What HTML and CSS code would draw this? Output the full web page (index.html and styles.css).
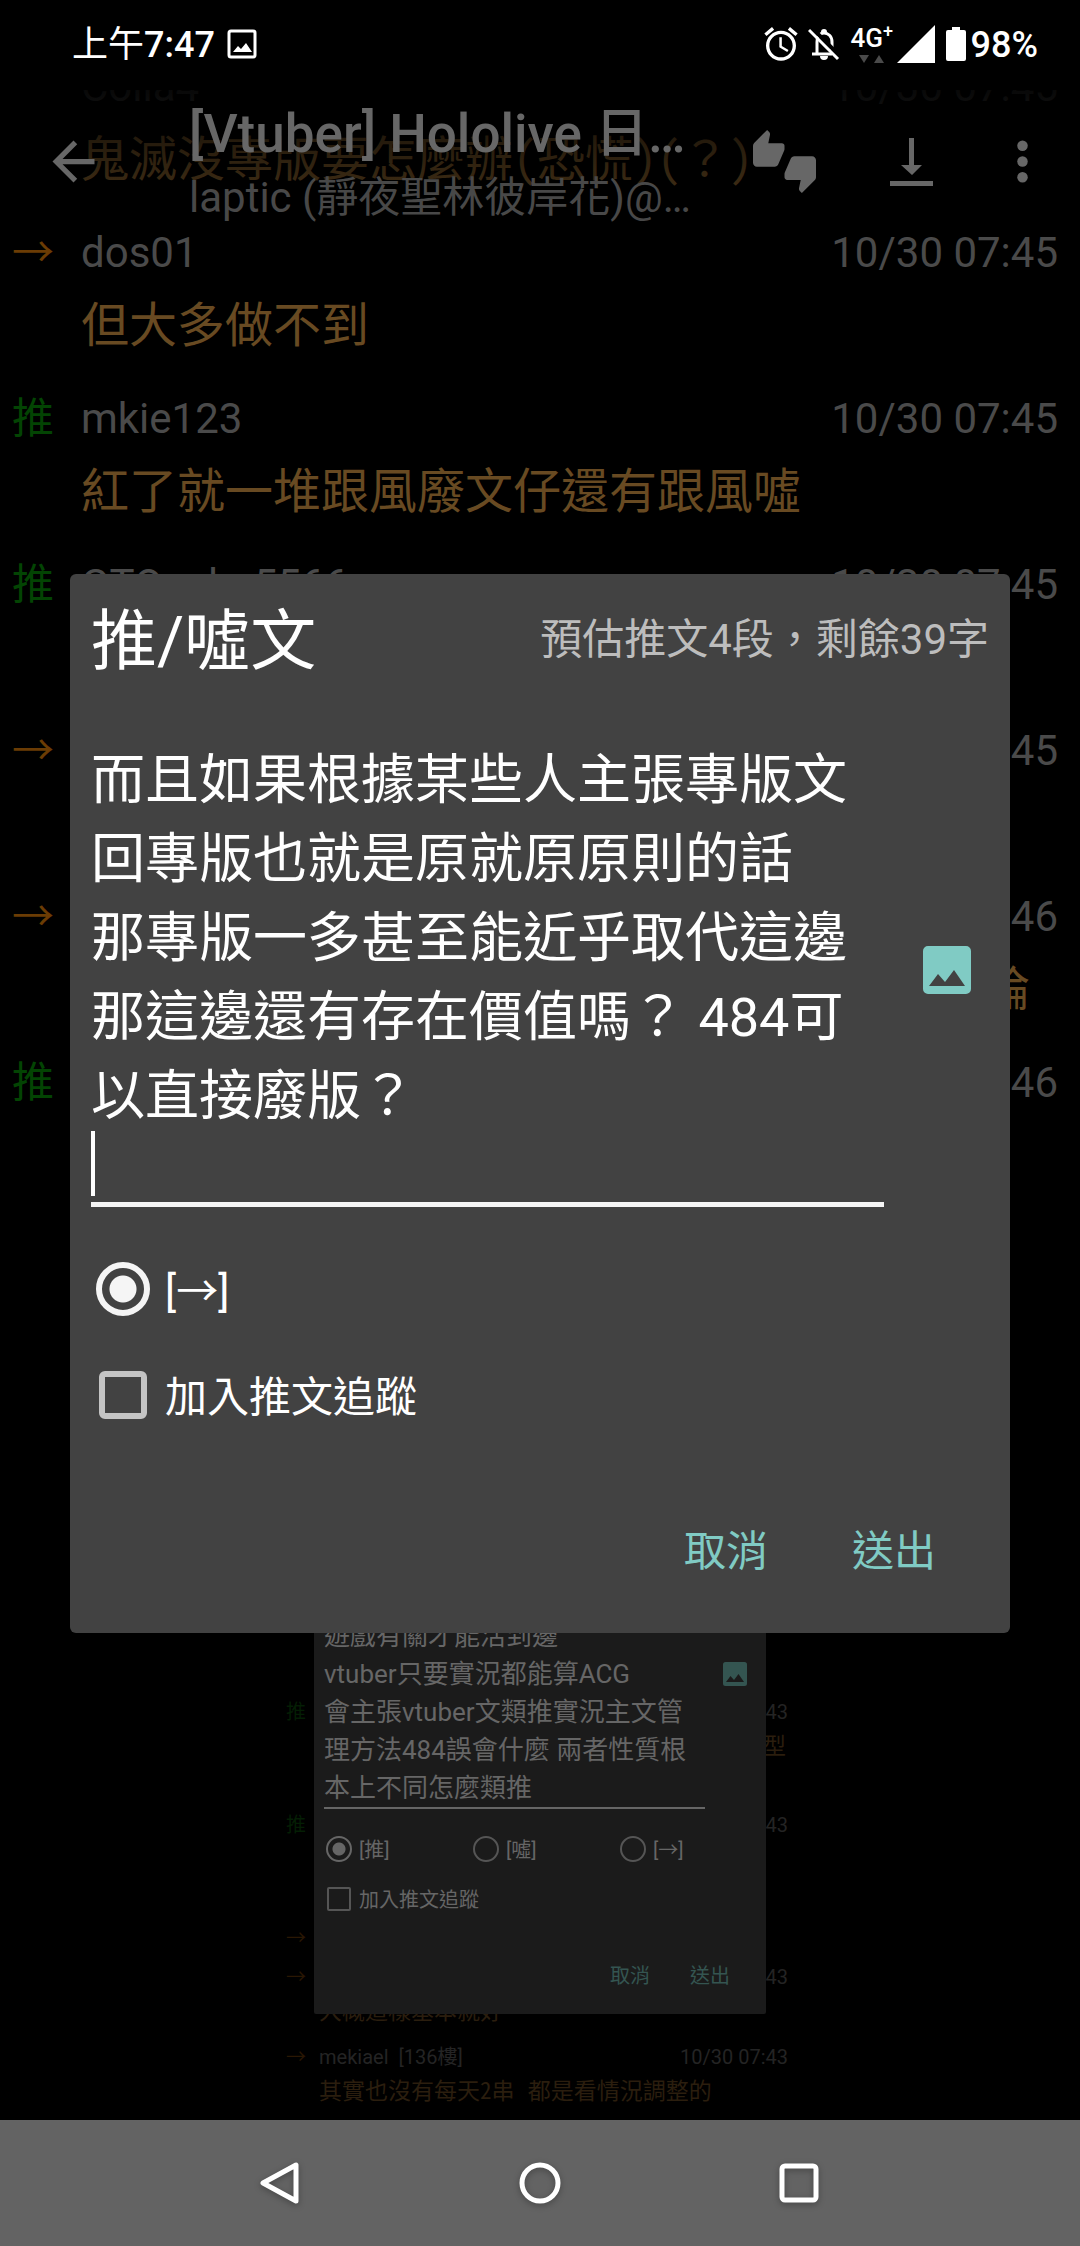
FILE: index.html
```html
<!DOCTYPE html>
<html lang="zh-Hant">
<head>
<meta charset="utf-8">
<meta name="viewport" content="width=device-width, initial-scale=1">
<title>推/噓文</title>
<link rel="stylesheet" href="styles.css">
</head>
<body>
<div class="screen">
  <header class="status">
    <span class="status-text"><span class="meridiem">上午</span>7:47</span>
    <svg class="status-photo" viewBox="0 0 30 30"><rect x="2" y="2" width="26" height="26" rx="2" fill="none" stroke="#fff" stroke-width="3"/><path d="M6 23l5-6 3 3 5-6 6 9z" fill="#fff"/></svg>
    <span class="spacer"></span>
    <svg class="status-alarm" viewBox="0 0 24 24"><path fill="#fff" d="M22 5.72l-4.6-3.86-1.29 1.53 4.6 3.86L22 5.72zM7.88 3.39L6.6 1.86 2 5.71l1.29 1.53 4.59-3.85zM12.5 8H11v6l4.75 2.85.75-1.23-4-2.37V8zM12 4c-4.97 0-9 4.03-9 9s4.02 9 9 9c4.97 0 9-4.03 9-9s-4.03-9-9-9zm0 16c-3.87 0-7-3.13-7-7s3.13-7 7-7 7 3.13 7 7-3.13 7-7 7z"/></svg>
    <svg class="status-bell" viewBox="0 0 32 34"><path d="M9 27V15c0-6 3-9 7-9s8 3 8 9v8M4 27h20" fill="none" stroke="#fff" stroke-width="3"/><path d="M13 5a3 3 0 0 1 6 0zM12 29h8a4 4 0 0 1-8 0z" fill="#fff"/><path d="M4 1l29 29" stroke="#000" stroke-width="4"/><path d="M1 3l29 29" stroke="#fff" stroke-width="3"/></svg>
    <span class="network">
      <span class="network-name">4G<sup>+</sup></span>
      <svg class="network-traffic" viewBox="0 0 26 8"><path d="M0 0h10L5 8zM15 8h10l-5-8z" fill="#4a4a4a"/></svg>
    </span>
    <svg class="status-signal" viewBox="0 0 38 38"><path d="M38 0v38H0z" fill="#fff"/></svg>
    <svg class="status-battery" viewBox="0 0 20 34"><path d="M6 0h8v3h4a2 2 0 0 1 2 2v27a2 2 0 0 1-2 2H2a2 2 0 0 1-2-2V5a2 2 0 0 1 2-2h4z" fill="#fff"/></svg>
    <span class="status-text">98%</span>
  </header>

  <nav class="toolbar">
    <button class="tool back" aria-label="返回"><svg viewBox="0 0 24 24"><path d="M20 11H7.83l5.59-5.59L12 4l-8 8 8 8 1.41-1.41L7.83 13H20v-2z"/></svg></button>
    <div class="headline">
      <h1>[Vtuber] Hololive 日…</h1>
      <p>laptic (靜夜聖林彼岸花)@…</p>
    </div>
    <button class="tool" aria-label="推噓"><svg viewBox="0 0 24 24"><path d="M12 6c0-.55-.45-1-1-1H5.82l.66-3.18.02-.23c0-.31-.13-.59-.33-.8L5.38 0 .44 4.94C.17 5.21 0 5.59 0 6v6.5c0 .83.67 1.5 1.5 1.5h6.75c.62 0 1.15-.38 1.38-.91l2.26-5.29c.07-.17.11-.36.11-.55V6zm10.5 4h-6.75c-.62 0-1.15.38-1.38.91l-2.26 5.29c-.07.17-.11.36-.11.55V18c0 .55.45 1 1 1h5.18l-.66 3.18-.02.24c0 .31.13.59.33.8l.79.78 4.94-4.94c.27-.27.44-.65.44-1.06v-6.5c0-.83-.67-1.5-1.5-1.5z"/></svg></button>
    <button class="tool download" aria-label="下載"><svg viewBox="0 0 63 63"><path d="M29 8h5v27h8L32 45 21 35h8zM10 51h43v5H10z"/></svg></button>
    <button class="tool more" aria-label="更多"><svg viewBox="0 0 24 24"><circle cx="12" cy="6" r="2"/><circle cx="12" cy="12" r="2"/><circle cx="12" cy="18" r="2"/></svg></button>
  </nav>

  <main class="comments">
    <article class="row"><span class="mark"></span><span class="name">Colla4</span><time>10/30 07:45</time><p>鬼滅沒專版要怎麼辦(恐慌)(<span class="full">？</span>)</p></article>
    <article class="row"><span class="mark arrow">→</span><span class="name">dos01</span><time>10/30 07:45</time><p>但大多做不到</p></article>
    <article class="row"><span class="mark push">推</span><span class="name">mkie123</span><time>10/30 07:45</time><p>紅了就一堆跟風廢文仔還有跟風噓</p></article>
    <article class="row"><span class="mark push">推</span><span class="name">GTOcube5566</span><time>10/30 07:45</time></article>
    <article class="row"><span class="mark arrow">→</span><span class="name"></span><time>10/30 07:45</time></article>
    <article class="row"><span class="mark arrow">→</span><span class="name"></span><time>10/30 07:46</time><p class="tail">論</p></article>
    <article class="row"><span class="mark push">推</span><span class="name"></span><time>10/30 07:46</time></article>

    <section class="preview">
      <div class="mini-rows">
        <article class="row"><span class="mark push">推</span><span class="name"></span><time>10/30 07:43</time><p class="tail two">型</p></article>
        <article class="row"><span class="mark push">推</span><span class="name"></span><time>10/30 07:43</time><p class="two"></p></article>
        <article class="row short"><span class="mark arrow">→</span></article>
        <article class="row"><span class="mark arrow">→</span><span class="name"></span><time>10/30 07:43</time><p>大概這樣基本就好</p></article>
        <article class="row"><span class="mark arrow">→</span><span class="name">mekiael&nbsp; [136樓]</span><time>10/30 07:43</time><p>其實也沒有每天2串<span class="full">  </span>都是看情況調整的</p></article>
      </div>
      <form class="mini-dialog">
        <div class="editor">
          <textarea aria-label="推文內容" spellcheck="false" readonly>遊戲有關才能活到邊
vtuber只要實況都能算ACG
會主張vtuber文類推實況主文管理方法484誤會什麼 兩者性質根本上不同怎麼類推</textarea>
          <button type="button" class="photo" aria-label="插入圖片"><svg viewBox="0 0 48 48"><path fill-rule="evenodd" d="M5 0h38a5 5 0 0 1 5 5v38a5 5 0 0 1-5 5H5a5 5 0 0 1-5-5V5a5 5 0 0 1 5-5zM6 40h36L31 24l-9 12-7-8z"/></svg></button>
        </div>
        <div class="options">
          <label><input type="radio" name="mini" checked><span>[推]</span></label>
          <label><input type="radio" name="mini"><span>[噓]</span></label>
          <label><input type="radio" name="mini"><span>[→]</span></label>
        </div>
        <label class="track"><input type="checkbox"><span>加入推文追蹤</span></label>
        <div class="actions"><button type="button">取消</button><button type="button">送出</button></div>
      </form>
    </section>
  </main>

  <div class="overlay">
    <form class="dialog" role="dialog" aria-labelledby="dialog-title">
      <div class="dialog-head"><h2 id="dialog-title">推/噓文</h2><span>預估推文4段，剩餘39字</span></div>
      <div class="editor">
        <div class="field">
          <textarea aria-label="推文內容" spellcheck="false">而且如果根據某些人主張專版文回專版也就是原就原原則的話
那專版一多甚至能近乎取代這邊
那這邊還有存在價值嗎？ 484可以直接廢版？
</textarea>
          <span class="caret"></span>
        </div>
        <button type="button" class="photo" aria-label="插入圖片"><svg viewBox="0 0 48 48"><path fill-rule="evenodd" d="M5 0h38a5 5 0 0 1 5 5v38a5 5 0 0 1-5 5H5a5 5 0 0 1-5-5V5a5 5 0 0 1 5-5zM6 40h36L31 24l-9 12-7-8z"/></svg></button>
      </div>
      <div class="options"><label><input type="radio" name="type" checked><span>[→]</span></label></div>
      <label class="track"><input type="checkbox"><span>加入推文追蹤</span></label>
      <div class="actions"><button type="button">取消</button><button type="button">送出</button></div>
    </form>
  </div>

  <footer class="navbar">
    <button aria-label="返回"><svg viewBox="0 0 44 44"><path d="M37 4v36L4 22z"/></svg></button>
    <button aria-label="主畫面"><svg viewBox="0 0 44 44"><circle cx="22" cy="22" r="18"/></svg></button>
    <button aria-label="最近使用"><svg viewBox="0 0 44 44"><rect x="5" y="5" width="34" height="34" rx="3"/></svg></button>
  </footer>
</div>
</body>
</html>
```
FILE: styles.css
```css
* { box-sizing: border-box; }

body {
  margin: 0;
  background: #000;
  font-family: Roboto, "Noto Sans CJK TC", sans-serif;
}

h1, h2, p { margin: 0; font-weight: 400; }

button {
  padding: 0;
  border: 0;
  background: none;
  color: inherit;
  font: inherit;
}

svg { display: block; flex: none; }

.screen {
  position: relative;
  display: flex;
  flex-direction: column;
  min-height: 100vh;
  overflow: hidden;
}

/* Status bar */
.status {
  position: absolute;
  z-index: 3;
  top: 0;
  left: 0;
  right: 0;
  display: flex;
  align-items: center;
  height: 90px;
  padding: 0 42px 2px 72px;
  background: #000;
  color: #fff;
}
.status-text { padding-top: 2px; font-size: 36px; font-weight: 500; line-height: 48px; }
.meridiem { font-weight: 400; }
.spacer { flex: 1; }
.status-photo { width: 30px; height: 30px; margin-left: 12px; }
.status-alarm { width: 40px; height: 40px; margin-right: 7px; }
.status-bell { width: 32px; height: 34px; margin-right: 11px; }
.network { display: flex; flex-direction: column; gap: 4px; width: 46px; }
.network-name { font-size: 26px; font-weight: 500; line-height: 26px; white-space: nowrap; }
.network-name sup { font-size: 18px; line-height: 0; }
.network-traffic { width: 26px; height: 8px; margin-left: 8px; }
.status-signal { width: 38px; height: 38px; margin-right: 11px; }
.status-battery { width: 20px; height: 34px; margin-right: 5px; }

/* Toolbar floating over the comment list */
.toolbar {
  position: absolute;
  z-index: 2;
  top: 88px;
  left: 0;
  right: 0;
  display: flex;
  align-items: center;
  height: 147px;
  padding-left: 42px;
  background: linear-gradient(rgba(0, 0, 0, .9), rgba(0, 0, 0, .8) 20px, rgba(0, 0, 0, .2));
  color: #676767;
}
.tool svg { width: 63px; height: 63px; fill: currentColor; }
.headline { flex: 1; min-width: 0; margin-left: 84px; padding-top: 5px; white-space: nowrap; }
.headline h1 { font-size: 53px; font-weight: 500; line-height: 68px; }
.headline p { color: #484848; font-size: 42px; line-height: 60px; }
.download { margin-left: 64px; }
.more { margin: 0 26px 0 48px; }

/* Comment list */
.comments { flex: 1; padding-top: 47px; }
.row {
  display: grid;
  grid-template-columns: 69px 1fr auto;
  grid-template-rows: 56px 90px;
  padding: 12px 22px 8px 12px;
  color: #4a4a4a;
  font-size: 42px;
  line-height: 56px;
}
.row p {
  grid-column: 2 / 4;
  color: #684a22;
  font-family: "Noto Sans CJK TC", sans-serif;
  font-feature-settings: "hwid";
  font-size: 48px;
  line-height: 80px;
}
.row .full { font-feature-settings: normal; white-space: pre; }
.row .tail { padding-right: 28px; text-align: right; }
.push { color: #034403; }
.arrow { color: #6b3c04; }

/* Embedded picture of an earlier draft */
.preview {
  position: relative;
  width: 520px;
  margin: 0 auto;
  padding-top: 483px;
}
.mini-rows .row {
  grid-template-columns: 33px 1fr auto;
  grid-template-rows: 28px auto;
  row-gap: 2px;
  padding: 6px 12px 11px 6px;
  color: #242424;
  font-size: 20px;
  line-height: 28px;
}
.mini-rows .short { display: block; padding-bottom: 5px; }
.mini-rows p { color: #2b1e0e; font-size: 23px; line-height: 33px; }
.mini-rows .full { padding-left: 3px; }
.mini-rows .tail { padding-right: 2px; }
.mini-rows .two { height: 66px; }
.mini-rows .push { color: #041e04; }
.mini-rows .arrow { color: #2a1703; }

.mini-dialog {
  position: absolute;
  left: 34px;
  right: 34px;
  bottom: 103px;
  padding: 30px 10px 19px;
  border-radius: 2px;
  background: #1b1b1b;
  color: #666;
  font-size: 20px;
}

/* Reply dialog */
.overlay {
  position: absolute;
  z-index: 4;
  top: 0;
  left: 0;
  right: 0;
  padding: 574px 70px 0;
}
.dialog {
  padding: 26px 21px 40px;
  border-radius: 6px;
  background: #424242;
  color: #fff;
  font-size: 42px;
}
.dialog-head { display: flex; align-items: flex-start; justify-content: space-between; height: 80px; }
.dialog-head h2 { font-size: 66px; line-height: 84px; }
.dialog-head span { color: #bdbdbd; line-height: 80px; }

.editor { display: flex; align-items: center; }
.dialog .editor { gap: 39px; margin-top: 59px; }
.field { position: relative; flex: 1; }
textarea {
  display: block;
  width: 100%;
  padding: 0;
  border: 0;
  outline: 0;
  overflow: hidden;
  resize: none;
  background: none;
  color: inherit;
  font-family: inherit;
}
.field textarea { height: 468px; padding-top: 2px; border-bottom: 5px solid #f5f5f5; font-size: 54px; line-height: 79px; }
.caret { position: absolute; left: 0; bottom: 11px; width: 4px; height: 65px; background: #fff; }
.photo { color: #80cbc4; }
.photo svg { width: 48px; height: 48px; fill: currentColor; }
.dialog .photo { margin-right: 18px; padding-bottom: 6px; }

label { display: flex; align-items: center; }
input { appearance: none; flex: none; margin: 0; }
.dialog .options { margin-top: 29px; }
.dialog label { height: 106px; padding-left: 5px; }
.dialog label span { padding-bottom: 4px; }
.dialog input { width: 54px; height: 54px; margin-right: 15px; border: 6px solid #f5f5f5; }
input[type="radio"] { border-radius: 50%; }
.dialog input:checked { background: radial-gradient(circle, #f5f5f5 13px, transparent 14px); }
.dialog input[type="checkbox"] { width: 48px; height: 48px; margin: 0 18px 0 3px; border-color: #c4c4c4; border-radius: 6px; }
.actions { display: flex; justify-content: flex-end; color: #80cbc4; }
.dialog .actions { gap: 84px; height: 87px; margin-top: 58px; padding: 0 53px 4px 0; }

.mini-dialog .editor { gap: 18px; padding-right: 9px; }
.mini-dialog textarea { height: 269px; padding-top: 77px; border-bottom: 2px solid #666; font-size: 26px; line-height: 38px; }
.mini-dialog .photo { padding-bottom: 2px; color: #345551; }
.mini-dialog .photo svg { width: 24px; height: 24px; }
.mini-dialog .options { display: grid; grid-template-columns: repeat(3, 147px); margin-top: 15px; }
.mini-dialog label { height: 50px; padding-left: 2px; }
.mini-dialog label span { padding-bottom: 2px; }
.mini-dialog input { width: 26px; height: 26px; margin-right: 7px; border: 2px solid #555; }
.mini-dialog input:checked { border-color: #666; background: radial-gradient(circle, #666 6px, transparent 7px); }
.mini-dialog input[type="checkbox"] { width: 24px; height: 24px; margin: 0 8px 0 1px; border-radius: 2px; }
.mini-dialog .actions { gap: 40px; height: 41px; margin-top: 30px; padding: 0 26px 1px 0; color: #345551; }

/* System navigation */
.navbar {
  position: relative;
  display: flex;
  justify-content: center;
  align-items: center;
  gap: 215px;
  height: 126px;
  background: #636363;
}
.navbar svg {
  width: 44px;
  height: 44px;
  fill: none;
  stroke: #fff;
  stroke-width: 5;
  stroke-linejoin: round;
  filter: drop-shadow(0 2px 3px rgba(0, 0, 0, .3));
}
```
